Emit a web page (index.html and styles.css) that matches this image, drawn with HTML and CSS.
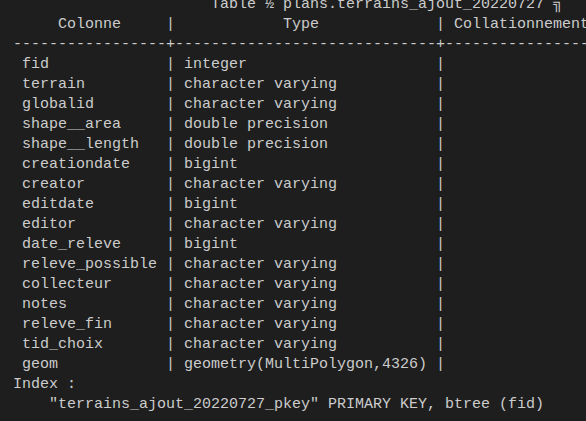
FILE: index.html
```html
<!DOCTYPE html>
<html lang="fr">
<head>
<meta charset="utf-8">
<title>psql</title>
<link rel="stylesheet" href="styles.css">
</head>
<body>
<pre class="term">                      Table ½ plans.terrains_ajout_20220727 ╗
     Colonne     |            Type             | Collationnement
-----------------+-----------------------------+----------------
 fid             | integer                     |
 terrain         | character varying           |
 globalid        | character varying           |
 shape__area     | double precision            |
 shape__length   | double precision            |
 creationdate    | bigint                      |
 creator         | character varying           |
 editdate        | bigint                      |
 editor          | character varying           |
 date_releve     | bigint                      |
 releve_possible | character varying           |
 collecteur      | character varying           |
 notes           | character varying           |
 releve_fin      | character varying           |
 tid_choix       | character varying           |
 geom            | geometry(MultiPolygon,4326) |
Index :
    "terrains_ajout_20220727_pkey" PRIMARY KEY, btree (fid)
</pre>
</body>
</html>
```
FILE: styles.css
```css
html, body {
  margin: 0;
  padding: 0;
  background: #1e1e1e;
  overflow: hidden;
}
.term {
  margin: -5px 0 0 0;
  padding: 0 0 0 13px;
  font-family: "Liberation Mono", monospace;
  font-size: 15px;
  line-height: 20px;
  color: #cccccc;
  white-space: pre;
}
```
